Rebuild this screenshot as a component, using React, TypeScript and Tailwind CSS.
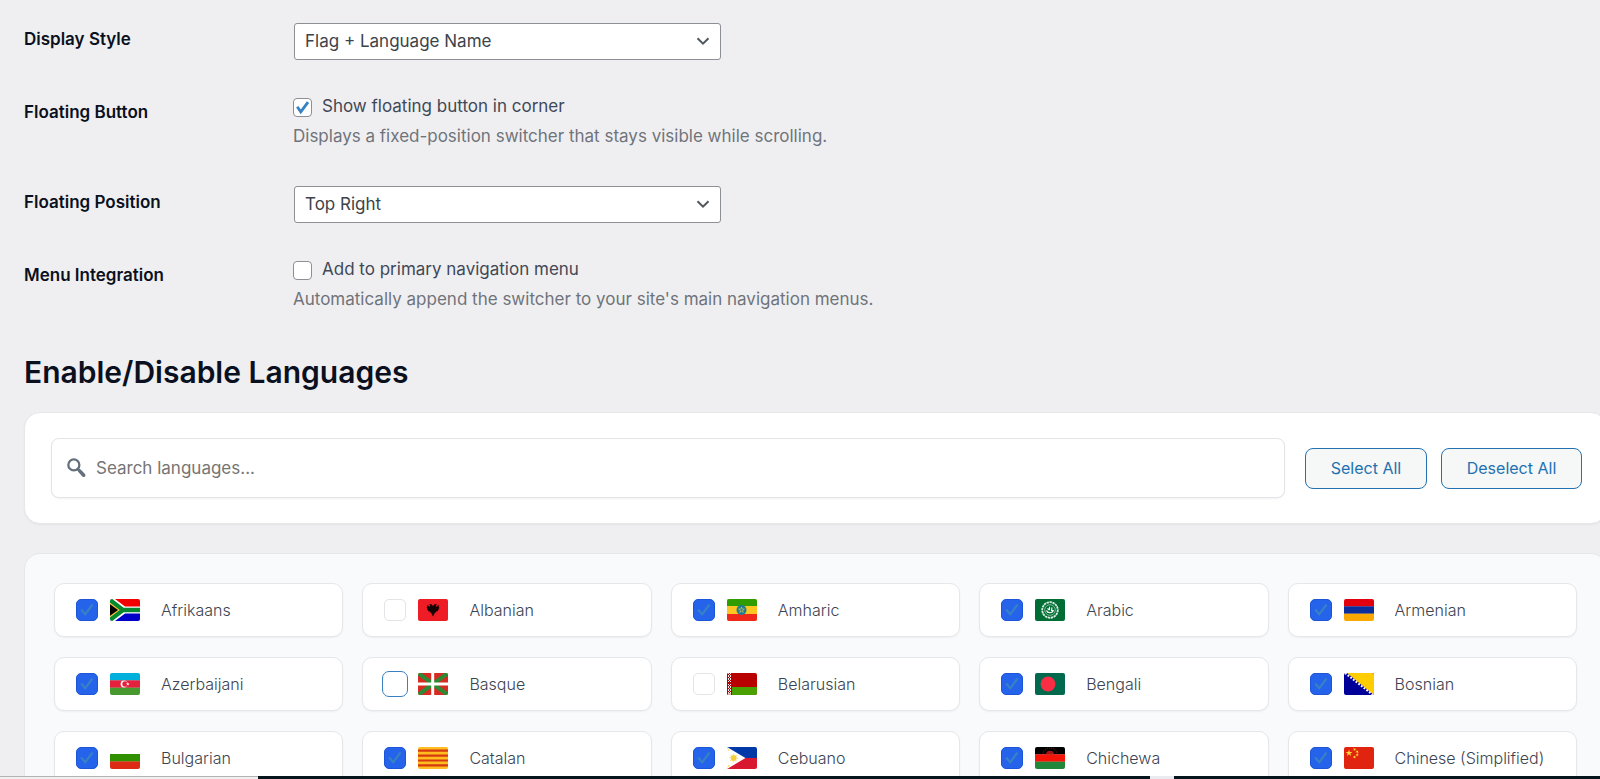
import React, { useState } from 'react';

interface Language {
  code: string;
  name: string;
  enabled: boolean;
  active?: boolean;
}

const initialLanguages: Language[] = [
  { code: 'za', name: 'Afrikaans', enabled: true },
  { code: 'al', name: 'Albanian', enabled: false },
  { code: 'et', name: 'Amharic', enabled: true },
  { code: 'arab', name: 'Arabic', enabled: true },
  { code: 'am', name: 'Armenian', enabled: true },
  { code: 'az', name: 'Azerbaijani', enabled: true },
  { code: 'eu', name: 'Basque', enabled: false, active: true },
  { code: 'by', name: 'Belarusian', enabled: false },
  { code: 'bd', name: 'Bengali', enabled: true },
  { code: 'ba', name: 'Bosnian', enabled: true },
  { code: 'bg', name: 'Bulgarian', enabled: true },
  { code: 'ct', name: 'Catalan', enabled: true },
  { code: 'ph', name: 'Cebuano', enabled: true },
  { code: 'mw', name: 'Chichewa', enabled: true },
  { code: 'cn', name: 'Chinese (Simplified)', enabled: true },
];

const star = '0,-10 2.2,-3.1 9.5,-3.1 3.6,1.2 5.9,8.1 0,3.8 -5.9,8.1 -3.6,1.2 -9.5,-3.1 -2.2,-3.1';

// Flag artwork, drawn on a 30x22 grid
const flags: Record<string, React.ReactNode> = {
  za: (
    <>
      <rect width="30" height="11" fill="#f40000" />
      <rect y="11" width="30" height="11" fill="#0000c8" />
      <path d="M0 0h5l10 7.4h15v7.2H15L5 22H0z" fill="#fff" />
      <path d="M0 1l13 10L0 21M12 11h18" fill="none" stroke="#078930" strokeWidth="4.4" />
      <path d="M0 4l9.5 7L0 18z" fill="#fcb514" />
      <path d="M0 5.2L8 11l-8 5.8z" fill="#000" />
    </>
  ),
  al: (
    <>
      <rect width="30" height="22" fill="#ee1c25" />
      <path
        d="M15 7l-1.8-2-2.2.6 1.3 1.1-.4 1-2.7-2 .2 2.2-.9.2.8 1.2-.5.9 1.3.7-.2 1.3 1.6-.2.3 1.6 1-.4.8 1.6L15 17.4l1.4-2.6.8-1.6 1 .4.3-1.6 1.6.2-.2-1.3 1.3-.7-.5-.9.8-1.2-.9-.2.2-2.2-2.7 2-.4-1L19 5.6 16.8 5z"
        fill="#160304"
      />
    </>
  ),
  et: (
    <>
      <rect width="30" height="22" fill="#ffc621" />
      <rect width="30" height="7" fill="#2f9c00" />
      <rect y="15" width="30" height="7" fill="#f0281a" />
      <circle cx="14.5" cy="11" r="5" fill="#1d7d96" />
      <polygon points={star} transform="translate(14.5 11) scale(.3)" fill="none" stroke="#e9d44c" strokeWidth="2" />
    </>
  ),
  arab: (
    <>
      <rect width="30" height="22" fill="#006d35" />
      <circle cx="15" cy="11" r="7.8" fill="none" stroke="#d9eadf" strokeWidth="1.8" strokeDasharray="2.4 .6" />
      <circle cx="15" cy="11" r="5.3" fill="none" stroke="#8fc2a2" strokeWidth=".9" />
      <path d="M11.5 11.5c1 3 6 3 7-.5M12.5 9.5l2 1.5M14.5 7.8v3.4M17 8.4l-.5 3.1h2" fill="none" stroke="#fff" strokeWidth="1.1" />
    </>
  ),
  am: (
    <>
      <rect width="30" height="7.5" fill="#e3000f" />
      <rect y="7.3" width="30" height="7.5" fill="#0a2f9c" />
      <rect y="14.7" width="30" height="7.3" fill="#f8a800" />
    </>
  ),
  az: (
    <>
      <rect width="30" height="7.5" fill="#00b0dc" />
      <rect y="7.3" width="30" height="7.5" fill="#e4203c" />
      <rect y="14.7" width="30" height="7.3" fill="#46982f" />
      <circle cx="14" cy="11" r="3.4" fill="#fff" />
      <circle cx="15" cy="11" r="2.7" fill="#e4203c" />
      <polygon points={star} transform="translate(17.8 11) scale(.2)" fill="#fff" />
    </>
  ),
  eu: (
    <>
      <rect width="30" height="22" fill="#d62b22" />
      <path d="M0 0l30 22M30 0L0 22" stroke="#2b8a35" strokeWidth="4" />
      <path d="M14.7 0v22M0 11h30" stroke="#fff" strokeWidth="3" />
    </>
  ),
  by: (
    <>
      <rect width="30" height="22" fill="#b90000" />
      <rect y="14" width="30" height="8" fill="#49a000" />
      <rect width="5" height="22" fill="#b90000" />
      <path
        d="M1 0l3 3-3 3 3 3M4 0L1 3l3 3-3 3M1 11l3 3-3 3 3 3-3 2M4 11l-3 3 3 3-3 3 3 2"
        fill="none"
        stroke="#fff"
        strokeWidth=".9"
      />
    </>
  ),
  bd: (
    <>
      <rect width="30" height="22" fill="#00694e" />
      <circle cx="13" cy="11" r="7.4" fill="#f92d43" />
    </>
  ),
  ba: (
    <>
      <rect width="30" height="22" fill="#000099" />
      <path d="M3 0h27v22z" fill="#ffcc00" />
      <path d="M1 0l28 22" stroke="#fff" strokeWidth="2" strokeDasharray="1.8 1.6" />
    </>
  ),
  bg: (
    <>
      <rect width="30" height="22" fill="#fff" />
      <rect y="7" width="30" height="7.6" fill="#2f9000" />
      <rect y="14.4" width="30" height="7.6" fill="#dc2a14" />
    </>
  ),
  ct: (
    <>
      <rect width="30" height="22" fill="#ffbd1f" />
      <path d="M0 3.7h30M0 8.6h30M0 13.5h30M0 18.4h30" stroke="#d63a10" strokeWidth="2.2" />
    </>
  ),
  ph: (
    <>
      <rect width="30" height="11" fill="#0038a8" />
      <rect y="11" width="30" height="11" fill="#d81830" />
      <path d="M0 0l18.5 11L0 22z" fill="#fff" />
      <circle cx="6.6" cy="11" r="3" fill="#f4cf3c" />
      <circle cx="6.6" cy="11" r="4" fill="none" stroke="#f4cf3c" strokeDasharray="1 2" />
      <circle cx="1.6" cy="3" r=".8" fill="#f4cf3c" />
      <circle cx="1.6" cy="19" r=".8" fill="#f4cf3c" />
    </>
  ),
  mw: (
    <>
      <rect width="30" height="7.5" fill="#000" />
      <rect y="7.3" width="30" height="7.5" fill="#f41408" />
      <rect y="14.7" width="30" height="7.3" fill="#21873b" />
      <path d="M11 7.3a4 3.6 0 0 1 8 0z" fill="#a81210" />
      <path d="M8 6.5a7 5.5 0 0 1 14 0" fill="none" stroke="#a81210" strokeDasharray="1 1.2" />
    </>
  ),
  cn: (
    <>
      <rect width="30" height="22" fill="#e0240f" />
      <polygon points={star} transform="translate(5 6) scale(.36)" fill="#ffdc3a" />
      <polygon points={star} transform="translate(10.6 2.4) rotate(20) scale(.18)" fill="#ffdc3a" />
      <polygon points={star} transform="translate(13.2 4.8) rotate(40) scale(.18)" fill="#ffdc3a" />
      <polygon points={star} transform="translate(13.2 7.8) scale(.18)" fill="#ffdc3a" />
      <polygon points={star} transform="translate(10.6 10) rotate(20) scale(.18)" fill="#ffdc3a" />
    </>
  ),
};

const Flag: React.FC<{ code: string }> = ({ code }) => (
  <svg viewBox="0 0 30 22" className="w-[30px] h-[22px] shrink-0 rounded-xs" aria-hidden="true">
    {flags[code]}
  </svg>
);

const SearchIcon: React.FC = () => (
  <svg viewBox="0 0 20 20" className="absolute left-[13px] top-1/2 -translate-y-1/2 w-6 h-6 text-[#646f7c]" aria-hidden="true">
    <circle cx="8.2" cy="7.4" r="4.6" fill="none" stroke="currentColor" strokeWidth="1.9" />
    <path d="M11.4 10.8l1.5 1.5" stroke="currentColor" strokeWidth="2.2" />
    <path d="M13.2 12.6l3.2 3.4" stroke="currentColor" strokeWidth="3" strokeLinecap="round" />
  </svg>
);

const FormRow: React.FC<{ label: string; htmlFor: string; children: React.ReactNode }> = ({ label, htmlFor, children }) => (
  <div className="flex pt-[15px] pb-[21px]">
    <label htmlFor={htmlFor} className="w-[269px] shrink-0 pt-1 text-[17px] leading-6 font-semibold text-[#0b1020]">
      {label}
    </label>
    <div className="flex-1">{children}</div>
  </div>
);

const SelectField: React.FC<{ id: string; options: string[] }> = ({ id, options }) => (
  <div className="relative ml-px max-w-[427px]">
    <select
      id={id}
      className="block w-full h-[37px] appearance-none rounded-[3px] border border-[#8c8f94] bg-white pl-[10px] pr-8 text-[17px] text-[#3c434a]"
    >
      {options.map((option) => (
        <option key={option}>{option}</option>
      ))}
    </select>
    <svg viewBox="0 0 16 16" className="pointer-events-none absolute right-[10px] top-[10px] w-4 h-4" aria-hidden="true">
      <path d="M2.5 5.2L8 10.7l5.5-5.5" fill="none" stroke="#50575e" strokeWidth="2" />
    </svg>
  </div>
);

const OptionCheckbox: React.FC<{ id: string; label: string; hint: string; defaultChecked?: boolean }> = ({
  id,
  label,
  hint,
  defaultChecked,
}) => (
  <>
    <div className="flex items-center h-[22px]">
      <span className="relative w-[19px] h-[19px]">
        <input
          id={id}
          type="checkbox"
          defaultChecked={defaultChecked}
          className="peer block w-full h-full appearance-none rounded border border-[#8c8f94] bg-white"
        />
        <svg viewBox="0 0 19 19" className="pointer-events-none absolute inset-0 hidden peer-checked:block" aria-hidden="true">
          <path d="M4.2 8.8l3.6 5L15 4.2" fill="none" stroke="#3582c4" strokeWidth="2.8" />
        </svg>
      </span>
      <label htmlFor={id} className="pl-[10px] text-[17px] text-[#3f4857]">
        {label}
      </label>
    </div>
    <p className="mt-1 text-[17px] leading-7 text-[#6f747b]">{hint}</p>
  </>
);

const App: React.FC = () => {
  const [languages, setLanguages] = useState(initialLanguages);
  const [query, setQuery] = useState('');

  const setAll = (enabled: boolean) => setLanguages(languages.map((lang) => ({ ...lang, enabled })));
  const toggle = (code: string) =>
    setLanguages(languages.map((lang) => (lang.code === code ? { ...lang, enabled: !lang.enabled } : lang)));

  const visible = languages.filter((lang) => lang.name.toLowerCase().includes(query.toLowerCase()));

  return (
    <div className="h-screen overflow-hidden bg-[#efeff1] font-[Inter,sans-serif]">
      <div className="pl-6 pt-2">
        {/* Switcher settings */}
        <FormRow label="Display Style" htmlFor="display-style">
          <SelectField id="display-style" options={['Flag + Language Name', 'Flag Only', 'Language Name']} />
        </FormRow>
        <FormRow label="Floating Button" htmlFor="floating-button">
          <OptionCheckbox
            id="floating-button"
            label="Show floating button in corner"
            hint="Displays a fixed-position switcher that stays visible while scrolling."
            defaultChecked
          />
        </FormRow>
        <FormRow label="Floating Position" htmlFor="floating-position">
          <SelectField id="floating-position" options={['Top Right', 'Top Left', 'Bottom Right', 'Bottom Left']} />
        </FormRow>
        <FormRow label="Menu Integration" htmlFor="menu-integration">
          <OptionCheckbox
            id="menu-integration"
            label="Add to primary navigation menu"
            hint="Automatically append the switcher to your site's main navigation menus."
          />
        </FormRow>

        <h2 className="mt-5 text-[30px] leading-9 font-semibold text-[#0b1020]">Enable/Disable Languages</h2>

        {/* Search bar */}
        <div className="mt-[22px] -mr-[7px] flex items-center rounded-2xl border border-[#e5e7eb] bg-white pl-[26px] pr-6 py-[25px] shadow-xs">
          <div className="relative flex-1">
            <SearchIcon />
            <input
              type="search"
              aria-label="Search languages"
              placeholder="Search languages..."
              value={query}
              onChange={(e) => setQuery(e.target.value)}
              className="block w-full h-[60px] rounded-lg border border-[#e2e4e8] bg-white pl-11 pr-4 text-[17px] text-[#3f4857] placeholder:text-[#757575] shadow-xs"
            />
          </div>
          <button
            onClick={() => setAll(true)}
            className="ml-5 h-[41px] w-[122px] rounded-lg border border-[#2271b1] bg-[#f6f7f7] text-base text-[#2271b1]"
          >
            Select All
          </button>
          <button
            onClick={() => setAll(false)}
            className="ml-[14px] h-[41px] w-[141px] rounded-lg border border-[#2271b1] bg-[#f6f7f7] text-base text-[#2271b1]"
          >
            Deselect All
          </button>
        </div>

        {/* Language grid */}
        <div className="mt-[29px] -mr-[7px] grid grid-cols-5 gap-x-[19px] gap-y-5 rounded-2xl border border-[#e5e7eb] bg-[#f9fafc] p-[29px]">
          {visible.map((lang) => (
            <label
              key={lang.code}
              className="flex items-center h-[54px] rounded-[10px] border border-[#e5e7eb] bg-white pl-[21px] shadow-xs"
            >
              <span className="relative w-[22px] h-[22px] shrink-0">
                <input
                  type="checkbox"
                  checked={lang.enabled}
                  onChange={() => toggle(lang.code)}
                  className={`peer block w-full h-full appearance-none rounded-[5px] bg-white checked:bg-[#2563eb] checked:border-[#1d55d8] ${
                    lang.active ? 'border-0 outline-1 outline-offset-1 outline-[#3b7fc0]' : 'border border-[#e2e4e8]'
                  }`}
                />
                <svg viewBox="0 0 22 22" className="pointer-events-none absolute inset-0 hidden peer-checked:block" aria-hidden="true">
                  <path d="M5.2 10.5l4 4.8L16.5 5.5" fill="none" stroke="#3582c4" strokeWidth="2.2" />
                </svg>
              </span>
              <span className="ml-3 flex">
                <Flag code={lang.code} />
              </span>
              <span className="ml-[21px] text-base font-light text-[#3c4452]">{lang.name}</span>
            </label>
          ))}
        </div>
      </div>

      {/* Strip along the bottom edge of the window */}
      <div className="fixed inset-x-0 bottom-0 flex h-[3px]">
        <div className="w-[16.1%] border-t border-[#b4b4b6] bg-[#f0f0f1]" />
        <div className="w-[55.8%] bg-[#06141c]" />
        <div className="w-[1.5%] bg-[#e9ebf0]" />
        <div className="flex-1 bg-[#06141c]" />
      </div>
    </div>
  );
};

export default App;
